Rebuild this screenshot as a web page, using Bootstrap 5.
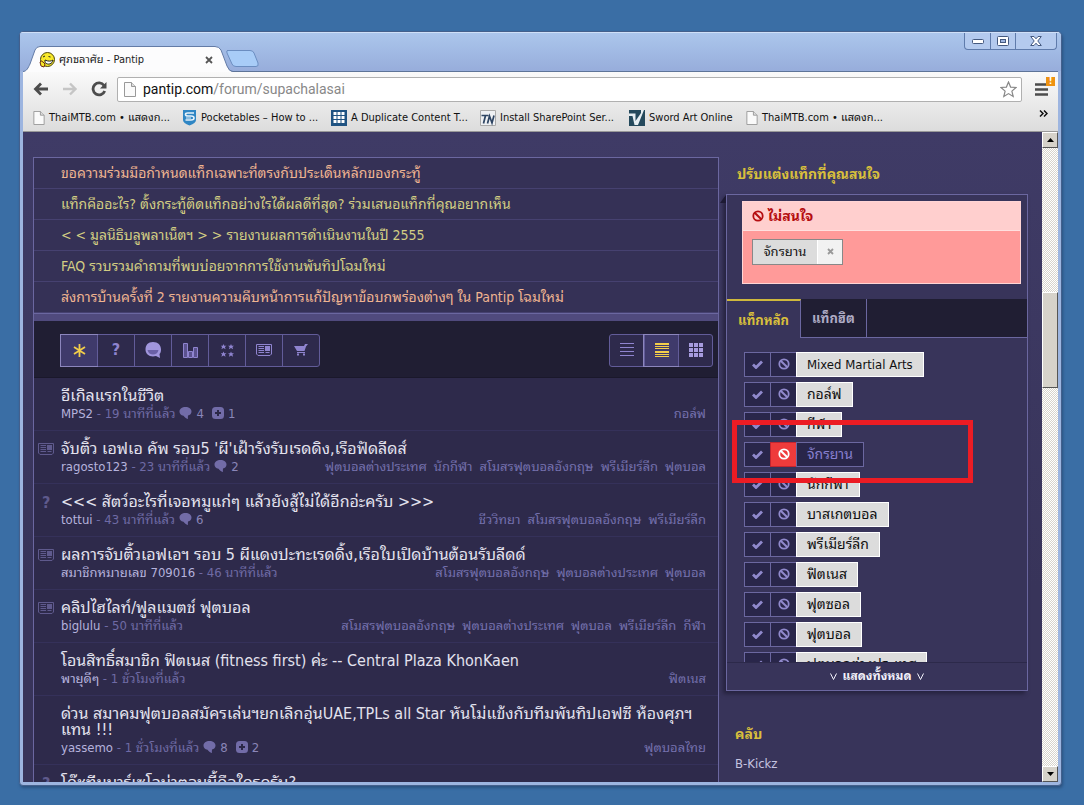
<!DOCTYPE html>
<html lang="th">
<head>
<meta charset="utf-8">
<meta name="viewport" content="width=device-width, initial-scale=1">
<title>ศุภชลาศัย - Pantip</title>
<link href="https://cdn.jsdelivr.net/npm/bootstrap@5.3.0/dist/css/bootstrap.min.css" rel="stylesheet">
<style>
  :root { --line: #6b67a0; --deep: #201e33; --panel: #38345a; }
  body { background: #3a6ea5; font-family: "DejaVu Sans Condensed", "Noto Sans Thai Looped", "Noto Looped Thai", Loma, Waree, "Noto Sans Thai", "Noto Sans", sans-serif; font-size: 13px; line-height: 18px; color: #c5c3e0; }
  a { text-decoration: none; color: inherit; }
  button { font: inherit; padding: 0; border: 0; background: none; color: inherit; }
  svg { display: block; flex: none; }
  .desk { height: 100vh; padding: 31px 22px 19px 19px; }
  .win { border: 1px solid #44608c; border-radius: 4px 5px 4px 4px; background: #9db5e0; padding: 0 3px 3px 3px; box-shadow: inset 0 1px #d4e4fa, 1px 2px 3px #2b5280; }
  .titlebar { height: 41px; margin: 0 -3px; padding: 0 3px; background: linear-gradient(#abc6ec, #97addb); border-top: 1px solid #cfe0f8; }
  .tabshape { width: 207px; height: 25px; padding: 3px 17px 0 16px; color: #222; font-size: 11px; }
  .tabshape > svg { left: 0; top: 0; }
  .newtab { margin: 0 0 4px -5px; }
  .winbtns { border: 1px solid #5f7bab; border-top: 0; border-radius: 0 0 4px 4px; height: 17px; margin-right: 1px; background: #b4caee; }
  .winbtns button { width: 25px; display: flex; align-items: center; justify-content: center; }
  .winbtns button + button { border-left: 1px solid #5f7bab; }
  .winbtns button:last-child { width: 41px; }
  .chrome { border-top: 1px solid #5e7498; background: linear-gradient(#fafafa, #dcdcdc); border-bottom: 1px solid #999; color: #111; }
  .navrow { height: 34px; padding: 5px 6px 4px 10px; gap: 13px; }
  .omni { height: 25px; border: 1px solid #b0b0b0; border-radius: 2px; background: #fff; padding: 0 4px 0 6px; font-family: Roboto, sans-serif; font-size: 14px; margin-left: -3px; gap: 7px; }
  .omni span { color: #888; }
  .alertdot { right: -7px; top: -6px; width: 9px; height: 9px; background: #ee9211; color: #fff; font-size: 9px; line-height: 9px; font-weight: bold; text-align: center; }
  .marks { height: 25px; padding: 0 10px 1px; font-size: 11px; }
  .marks a { flex: 0 0 149px; gap: 4px; white-space: nowrap; }
  .marks a.short { flex-basis: 117px; }
  .page { background: linear-gradient(#3f3b66, #38345a 70%); padding: 25px 14px 0 10px; gap: 7px; }
  .forum { border: 1px solid var(--line); border-bottom: 0; background: #2e2a4b; overflow: hidden; }
  .news a { display: block; height: 31px; padding: 6px 27px; background: #353156; border-bottom: 1px solid #464170; color: #d2cd83; font-size: 14px; white-space: nowrap; }
  .news a.hot { color: #efb491; }
  .strip { height: 8px; background: #504a7d; border-top: 1px solid #6b67a0; }
  .tools { height: 57px; background: var(--deep); border-bottom: 1px solid #1a182b; padding: 3px 5px 0 26px; }
  .tools .btn-group { border: 1px solid #625c99; border-radius: 3px; background: #2e2a4c; }
  .tools button { width: 37px; height: 31px; display: flex; align-items: center; justify-content: center; color: #8f84cf; }
  .tools button:first-child { width: 36px; }
  .tools button + button { border-left: 1px solid #625c99; }
  .tools .views button { width: 34px; }
  .tools button.on { background: #3f3a6b; box-shadow: 0 0 0 1px #8c86bd; color: #f2cd4a; }
  .topic { min-height: 53px; padding: 10px 12px 7px 4px; border-bottom: 1px solid #35315a; }
  .kind { flex: 0 0 23px; padding-top: 2px; color: #5f5a8d; }
  .topic h2 { font-size: 16px; line-height: 16px; margin: 0 0 1px; font-weight: 400; color: #e3e2ee; }
  .meta { color: #6f6aa5; font-size: 13px; gap: 4px; white-space: nowrap; }
  .meta b { font-weight: 400; color: #b5b2dc; }
  .meta i { font-style: normal; color: #8a86b8; }
  .meta svg { margin-bottom: 2px; }
  .taglinks { gap: 7px; color: #7470ad; white-space: nowrap; }
  .side { flex: 0 0 302px; }
  .side h3 { font-size: 14px; line-height: 18px; font-weight: 700; color: #d8bf3c; margin: 0; }
  .side .top { padding: 8px 11px 11px; }
  .box { border: 1px solid var(--line); background: var(--panel); box-shadow: -3px 3px 4px #26233f; }
  .fold { left: -7px; top: 0; }
  .ignored { margin: 6px 6px 15px 15px; border: 1px solid #ffd5d5; background: #ff9a99; height: 83px; }
  .ignored header { height: 29px; background: #ffcfce; border-bottom: 1px solid #ffe0df; padding: 0 9px; gap: 4px; color: #b50d10; font-weight: 700; font-size: 14px; }
  .chip { margin: 8px 9px; border: 1px solid #888; height: 26px; width: max-content; background: #dcdcdc; color: #111; }
  .chip button { width: 25px; border-left: 1px solid #fff; background: #f2f2f2; color: #999; display: flex; align-items: center; justify-content: center; }
  .chip span { width: 64px; text-align: center; line-height: 24px; }
  .tabs2 { height: 39px; background: var(--deep); border-bottom: 1px solid var(--line); }
  .tabs2 a { padding: 11px; height: 38px; border-right: 1px solid var(--line); font-weight: 700; color: #aeabc5; white-space: nowrap; }
  .tabs2 a.on { height: 39px; border-top: 2px solid #cfb83d; background: var(--panel); color: #d8bf3c; }
  .taglist { height: 324px; padding: 14px 17px 0; overflow: hidden; }
  .tagrow { height: 25px; margin-bottom: 5px; }
  .tagrow button { width: 26px; border: 1px solid var(--line); border-right: 0; background: #29264a; color: #9089cc; display: flex; align-items: center; justify-content: center; }
  .tagrow > a { border: 1px solid #fff; background: #dcdcdc; color: #111; padding: 0 10px; font-size: 14px; line-height: 23px; white-space: nowrap; }
  .tagrow > a:lang(en) { font-size: 13px; }
  .tagrow.off > a { background: #29264a; border-color: var(--line); color: #8880d0; }
  .tagrow.off button.no { background: #ef3b3b; border-color: #c32630; color: #fff; }
  .callout { left: -12px; top: -22px; width: 241px; height: 63px; border: 5px solid #ec1c24; pointer-events: none; z-index: 2; }
  .all { height: 28px; border-top: 1px solid #2c294a; color: #f1f0fa; font-weight: 700; font-size: 12px; gap: 5px; }
  .club { padding: 34px 9px 0; }
  .club a { display: block; margin-top: 12px; }
  .sbar { flex: 0 0 16px; background: repeating-conic-gradient(#d8d4cc 0 25%, #fff 0 50%) 0 0 / 2px 2px; }
  .sbar button, .thumb { background: #d6d2ca; border: 1px solid; border-color: #fff #555 #555 #fff; }
  .sbar button { height: 16px; display: flex; align-items: center; justify-content: center; color: #000; }
  .thumb { flex: 94 0 0; }
</style>
</head>
<body>
<svg width="0" height="0" class="position-absolute" aria-hidden="true">
  <symbol id="doc" viewBox="0 0 12 15"><path d="M.5.5h7l4 4v10H.5z" fill="#fafafa" stroke="#999"/><path d="M7.500.5v4h4" fill="#ddd" stroke="#999"/></symbol>
  <symbol id="ok" viewBox="0 0 11 9"><path d="M1 4.500 4 7.500 10 1.500" fill="none" stroke="currentColor" stroke-width="2.800"/></symbol>
  <symbol id="no" viewBox="0 0 12 12"><circle cx="6" cy="6" r="4.700" fill="none" stroke="currentColor" stroke-width="1.800"/><path d="M2.700 2.700 9.300 9.300" stroke="currentColor" stroke-width="2"/></symbol>
  <symbol id="say" viewBox="0 0 13 12"><path d="M6.500 0C10 0 12.500 1.800 12.500 4.500 12.500 7 11 8 9 8.500 8.800 10 8.800 11 9 12 7 11.500 5.500 10 4.500 8.700 1.800 8.300.5 6.800.5 4.500.5 1.800 3 0 6.500 0z" fill="#726ca8"/></symbol>
  <symbol id="plus" viewBox="0 0 12 12"><rect width="12" height="12" rx="3.500" fill="#726ca8"/><path d="M6 3v6M3 6h6" stroke="#2b2847" stroke-width="2"/></symbol>
  <symbol id="paper" viewBox="0 0 16 12"><path d="M.5.5h15v9.500l-1.500 1.500H2L.5 10z" fill="none" stroke="currentColor"/><path d="M2.500 2.500h5.500M2.500 4.500h5.500M2.500 6.500h5.500M2.500 8.500h5.500M9.500 8.500h4" stroke="currentColor"/><path d="M9 2h5v5H9z" fill="currentColor"/></symbol>
</svg>
<div class="desk">
<div class="win h-100 d-flex flex-column overflow-hidden">
  <div class="titlebar d-flex justify-content-between">
    <div class="d-flex align-items-end">
      <div class="tabshape position-relative d-flex align-items-center">
        <svg class="position-absolute" width="210" height="26"><path d="M0 26C4 25 5 22 7 18L12 4Q13.500.5 17 .5H192Q196 .5 198 4L204 20Q206 25.500 210 26z" fill="#fcfcfd"/><path d="M0 25.500C4 25 5 22 7 18L12 4Q13.500.5 17 .5H192Q196 .5 198 4L204 20Q206 25.500 210 25.500" fill="none" stroke="#637ba6"/></svg>
        <svg class="position-relative me-1" width="16" height="16" viewBox="0 0 16 16"><circle cx="8.500" cy="7.500" r="7" fill="#f8e92a" stroke="#4c4508"/><path d="M4 5l2-1M9.500 4.500l2 .5" stroke="#222"/><path d="M6 8c3 1.500 6 1.500 8 0-.5 4-5 5.500-8 2.500z" fill="#fff" stroke="#222"/><path d="M1 10q1-2 3 0l2 2-1 3-3-1z" fill="#f8e92a" stroke="#6d2b18"/></svg>
        <span class="position-relative flex-grow-1 text-nowrap">ศุภชลาศัย - Pantip</span>
        <button class="position-relative" aria-label="Close tab"><svg width="8" height="8"><path d="M1 1l6 6M7 1l-6 6" stroke="#555" stroke-width="1.800"/></svg></button>
      </div>
      <button class="newtab position-relative" aria-label="New tab"><svg width="34" height="17"><path d="M2 .5H25Q28 .5 29 3L33 13Q34 16.500 31 16.500H11Q8 16.500 7 14L2 3Q1 .5 3 .5z" fill="#a8ccf7" stroke="#6b8dc0"/></svg></button>
    </div>
    <div class="winbtns d-flex">
      <button aria-label="Minimize"><svg width="12" height="6"><rect x=".5" y="1.500" width="11" height="4" rx="1" fill="#fff" stroke="#44597f"/></svg></button>
      <button aria-label="Maximize"><svg width="12" height="10"><rect x=".5" y=".5" width="11" height="9" rx="1" fill="#fff" stroke="#44597f"/><rect x="3.500" y="3.500" width="5" height="3" fill="#9db5e0" stroke="#44597f"/></svg></button>
      <button aria-label="Close"><svg width="12" height="10" viewBox="0 0 12 10"><path d="M.7.5H4L6 2.800 8 .5h3.300L7.800 5l3.500 4.500H8L6 7.200 4 9.500H.7L4.200 5z" fill="#fff" stroke="#44597f"/></svg></button>
    </div>
  </div>
  <div class="chrome">
    <div class="navrow d-flex align-items-center">
      <button aria-label="Back"><svg width="16" height="14"><path d="M8 1.500 2.500 7 8 12.500M2.500 7H15" fill="none" stroke="#4c4c4c" stroke-width="2.800"/></svg></button>
      <button aria-label="Forward"><svg width="16" height="14"><path d="M8 1.500 13.500 7 8 12.500M13.500 7H1" fill="none" stroke="#c5c5c5" stroke-width="2.400"/></svg></button>
      <button aria-label="Reload"><svg width="16" height="16"><path d="M13 4.500A6 6 0 1 0 13.700 10" fill="none" stroke="#4c4c4c" stroke-width="2.800"/><path d="M15.500 1v6.500H9z" fill="#4c4c4c"/></svg></button>
      <div class="omni flex-grow-1 d-flex align-items-center">
        <svg width="12" height="15"><use href="#doc"/></svg>
        <div class="flex-grow-1">pantip.com<span>/forum/supachalasai</span></div>
        <button aria-label="Bookmark this page"><svg width="17" height="17" viewBox="0 0 17 17"><path d="M8.500 1l2.100 5.100 5.400.4-4.100 3.600 1.300 5.400-4.700-2.900-4.700 2.900 1.300-5.400L1 6.500l5.400-.4z" fill="#fff" stroke="#888" stroke-width="1.200"/></svg></button>
      </div>
      <button class="position-relative me-1" aria-label="Menu"><svg width="13" height="13"><path d="M0 1.500h13M0 6.500h13M0 11.500h13" stroke="#4c4c4c" stroke-width="2.600"/></svg><span class="alertdot position-absolute">!</span></button>
    </div>
    <nav class="marks d-flex align-items-center" aria-label="Bookmarks">
      <a href="#" class="d-flex align-items-center"><svg width="12" height="14"><use href="#doc"/></svg>ThaiMTB.com • แสดงก...</a>
      <a href="#" class="d-flex align-items-center"><svg width="15" height="17" viewBox="0 0 15 17"><path d="M1 1h13v10q0 3-6.500 5.500Q1 14 1 11z" fill="#2f86c4"/><path d="M12 4H5.500q-2 0-2 1.500T6 7h3q3 0 3 2t-3 2H3.500" fill="none" stroke="#e4f1fa" stroke-width="1.600"/><path d="M4 9h5" stroke="#e4f1fa"/></svg>Pocketables – How to ...</a>
      <a href="#" class="d-flex align-items-center"><svg width="16" height="16"><path fill="#1f5382" d="M0 0h16v16H0z"/><path d="M4 2v12M8 2v12M12 2v12" stroke="#fff" stroke-width="3" stroke-dasharray="3 1"/></svg>A Duplicate Content T...</a>
      <a href="#" class="d-flex align-items-center"><svg width="16" height="16"><path d="M.5.5h15v15H.5z" fill="#eef0f3" stroke="#aaa"/><path d="M1.500 5.500h7M5.500 5.500 3.500 13.500M7.500 13.500l2-7.500 2.500 7 2-7.500" fill="none" stroke="#2e4563" stroke-width="1.700"/></svg>Install SharePoint Ser...</a>
      <a href="#" class="short d-flex align-items-center"><svg width="16" height="16"><path fill="#24495c" d="M0 0h16v16H0z"/><path d="M0 3.500h6.500v7.500L12 3V0h3L9 15H5.500L3.500 6H0z" fill="#e6eef2"/></svg>Sword Art Online</a>
      <a href="#" class="d-flex align-items-center"><svg width="12" height="14"><use href="#doc"/></svg>ThaiMTB.com • แสดงก...</a>
      <button class="ms-auto mb-2" aria-label="More bookmarks"><svg width="9" height="7"><path d="M1 .5l3 3-3 3M5 .5l3 3-3 3" fill="none" stroke="#111" stroke-width="1.500"/></svg></button>
    </nav>
  </div>
  <div class="d-flex flex-grow-1 overflow-hidden">
    <div class="page flex-grow-1 d-flex overflow-hidden">
      <main class="forum flex-grow-1">
        <div class="news">
          <a href="#" class="hot">ขอความร่วมมือกำหนดแท็กเฉพาะที่ตรงกับประเด็นหลักของกระทู้</a>
          <a href="#">แท็กคืออะไร? ตั้งกระทู้ติดแท็กอย่างไรได้ผลดีที่สุด? ร่วมเสนอแท็กที่คุณอยากเห็น</a>
          <a href="#">&lt; &lt; มูลนิธิบลูพลาเน็ตฯ &gt; &gt; รายงานผลการดำเนินงานในปี 2555</a>
          <a href="#">FAQ รวบรวมคำถามที่พบบ่อยจากการใช้งานพันทิปโฉมใหม่</a>
          <a href="#" class="hot">ส่งการบ้านครั้งที่ 2 รายงานความคืบหน้าการแก้ปัญหาข้อบกพร่องต่างๆ ใน Pantip โฉมใหม่</a>
        </div>
        <div class="strip"></div>
        <div class="tools d-flex align-items-center justify-content-between">
          <div class="btn-group">
            <button class="on" aria-label="All"><svg width="13" height="13"><path d="M6.500 0v13M1 3l11 7M12 3 1 10" stroke="currentColor" stroke-width="1.800"/></svg></button>
            <button class="fw-bold fs-6" aria-label="Questions">?</button>
            <button aria-label="Chat"><svg width="17" height="16"><path d="M8 0c5 0 8 3 8 7.500 0 2-.5 3.500-1.500 4.500l.5 4-4-2C5 15.500.5 12.500.5 7.500.5 3 3 0 8 0z" fill="#a196dd"/><path d="M2.500 8h11c-.5 3-3 4.500-5.500 4.500S3 11 2.500 8z" fill="#6a60a6"/></svg></button>
            <button aria-label="Polls"><svg width="15" height="15"><path d="M.5.5h4v14h-4zM5.500 8.500h4v6h-4zM10.500 4.500h4v10h-4z" fill="#5b528f" stroke="currentColor"/></svg></button>
            <button aria-label="Reviews"><svg width="13" height="13" viewBox="0 0 13 13"><g fill="currentColor"><path id="st" d="M2.500 0l.8 1.700H5.500L3.900 3l.7 2.300-2.100-1.300L.4 5.300 1.100 3-.5 1.700h2.200z"/><use href="#st" x="7.500"/><use href="#st" y="7.500"/><use href="#st" x="7.500" y="7.500"/></g></svg></button>
            <button aria-label="News"><svg width="16" height="12"><use href="#paper"/></svg></button>
            <button aria-label="Market"><svg width="14" height="12"><path d="M0 2l10 0 1-2h3L12 2.500 10.500 7H3z" fill="currentColor"/><path d="M3 8.500h8" stroke="currentColor"/><path d="M3 10.500h2M9 10.500h2" stroke="currentColor" stroke-width="2"/></svg></button>
          </div>
          <div class="btn-group views">
            <button aria-label="Compact list"><svg width="14" height="14"><path d="M0 .5h14M0 4.500h14M0 8.500h14M0 12.500h14" stroke="currentColor"/></svg></button>
            <button class="on" aria-label="Detailed list"><svg width="14" height="15"><path d="M0 1h14M0 9h14" stroke="currentColor" stroke-width="2"/><path d="M0 3.500h14M0 5.500h14M0 11.500h14M0 13.500h14" stroke="currentColor"/></svg></button>
            <button aria-label="Grid"><svg width="14" height="14"><path d="M2 0v14M7 0v14M12 0v14" stroke="#a79cdf" stroke-width="4" stroke-dasharray="4 1"/></svg></button>
          </div>
        </div>
        <article class="topic d-flex"><div class="kind"></div><div class="flex-grow-1">
          <h2><a href="#">อีเกิลแรกในชีวิต</a></h2>
          <div class="d-flex justify-content-between"><div class="meta d-flex align-items-center"><span><b>MPS2</b> - 19 นาทีที่แล้ว</span><svg width="13" height="12"><use href="#say"/></svg><i>4</i><svg class="ms-1" width="12" height="12"><use href="#plus"/></svg><i>1</i></div>
          <div class="taglinks d-flex"><a href="#">กอล์ฟ</a></div></div></div></article>
        <article class="topic d-flex"><div class="kind"><svg width="16" height="12"><use href="#paper"/></svg></div><div class="flex-grow-1">
          <h2><a href="#">จับติ้ว เอฟเอ คัพ รอบ5 'ผี'เฝ้ารังรับเรดดิง,เรือฟัดลีดส์</a></h2>
          <div class="d-flex justify-content-between"><div class="meta d-flex align-items-center"><span><b>ragosto123</b> - 23 นาทีที่แล้ว</span><svg width="13" height="12"><use href="#say"/></svg><i>2</i></div>
          <div class="taglinks d-flex"><a href="#">ฟุตบอลต่างประเทศ</a><a href="#">นักกีฬา</a><a href="#">สโมสรฟุตบอลอังกฤษ</a><a href="#">พรีเมียร์ลีก</a><a href="#">ฟุตบอล</a></div></div></div></article>
        <article class="topic d-flex"><div class="kind fs-6 fw-bold ps-1 pt-0">?</div><div class="flex-grow-1">
          <h2><a href="#">&lt;&lt;&lt; สัตว์อะไรที่เจอหมูแก่ๆ แล้วยังสู้ไม่ได้อีกอ่ะครับ &gt;&gt;&gt;</a></h2>
          <div class="d-flex justify-content-between"><div class="meta d-flex align-items-center"><span><b>tottui</b> - 43 นาทีที่แล้ว</span><svg width="13" height="12"><use href="#say"/></svg><i>6</i></div>
          <div class="taglinks d-flex"><a href="#">ชีววิทยา</a><a href="#">สโมสรฟุตบอลอังกฤษ</a><a href="#">พรีเมียร์ลีก</a></div></div></div></article>
        <article class="topic d-flex"><div class="kind"><svg width="16" height="12"><use href="#paper"/></svg></div><div class="flex-grow-1">
          <h2><a href="#">ผลการจับติ้วเอฟเอฯ รอบ 5 ผีแดงปะทะเรดดิ้ง,เรือใบเปิดบ้านต้อนรับลีดด์</a></h2>
          <div class="d-flex justify-content-between"><div class="meta d-flex align-items-center"><span><b>สมาชิกหมายเลข 709016</b> - 46 นาทีที่แล้ว</span></div>
          <div class="taglinks d-flex"><a href="#">สโมสรฟุตบอลอังกฤษ</a><a href="#">ฟุตบอลต่างประเทศ</a><a href="#">ฟุตบอล</a></div></div></div></article>
        <article class="topic d-flex"><div class="kind"><svg width="16" height="12"><use href="#paper"/></svg></div><div class="flex-grow-1">
          <h2><a href="#">คลิปไฮไลท์/ฟูลแมตช์ ฟุตบอล</a></h2>
          <div class="d-flex justify-content-between"><div class="meta d-flex align-items-center"><span><b>biglulu</b> - 50 นาทีที่แล้ว</span></div>
          <div class="taglinks d-flex"><a href="#">สโมสรฟุตบอลอังกฤษ</a><a href="#">ฟุตบอลต่างประเทศ</a><a href="#">ฟุตบอล</a><a href="#">พรีเมียร์ลีก</a><a href="#">กีฬา</a></div></div></div></article>
        <article class="topic d-flex"><div class="kind"></div><div class="flex-grow-1">
          <h2><a href="#">โอนสิทธิ์สมาชิก ฟิตเนส (fitness first) ค่ะ -- Central Plaza KhonKaen</a></h2>
          <div class="d-flex justify-content-between"><div class="meta d-flex align-items-center"><span><b>พายุดีๆ</b> - 1 ชั่วโมงที่แล้ว</span></div>
          <div class="taglinks d-flex"><a href="#">ฟิตเนส</a></div></div></div></article>
        <article class="topic d-flex"><div class="kind"></div><div class="flex-grow-1">
          <h2><a href="#">ด่วน สมาคมฟุตบอลสมัครเล่นฯยกเลิกอุ่นUAE,TPLs all Star หันโม่แข้งกับทีมพันทิปเอฟซี ห้องศุภฯ แทน !!!</a></h2>
          <div class="d-flex justify-content-between"><div class="meta d-flex align-items-center"><span><b>yassemo</b> - 1 ชั่วโมงที่แล้ว</span><svg width="13" height="12"><use href="#say"/></svg><i>8</i><svg class="ms-1" width="12" height="12"><use href="#plus"/></svg><i>2</i></div>
          <div class="taglinks d-flex"><a href="#">ฟุตบอลไทย</a></div></div></div></article>
        <article class="topic d-flex"><div class="kind fs-6 fw-bold ps-1 pt-0">?</div><div class="flex-grow-1">
          <h2><a href="#">โค๊ชทีมบาร์เซโลน่าตอนนี้คือใครครับ?</a></h2></div></article>
      </main>
      <aside class="side">
        <h3 class="top">ปรับแต่งแท็กที่คุณสนใจ</h3>
        <div class="box position-relative">
          <svg class="fold position-absolute" width="6" height="8"><path d="M6 0v8H0z" fill="#1d1a33"/></svg>
          <section class="ignored">
            <header class="d-flex align-items-center"><svg width="12" height="12"><use href="#no"/></svg>ไม่สนใจ</header>
            <div class="chip d-flex"><span>จักรยาน</span><button aria-label="ลบ"><svg width="7" height="7"><path d="M1 1l5 5M6 1 1 6" stroke="currentColor" stroke-width="1.800"/></svg></button></div>
          </section>
          <nav class="tabs2 d-flex"><a href="#" class="on">แท็กหลัก</a><a href="#">แท็กฮิต</a></nav>
          <div class="taglist">
            <div class="tagrow d-flex"><button aria-label="สนใจ"><svg width="11" height="9"><use href="#ok"/></svg></button><button aria-label="ไม่สนใจ"><svg width="12" height="12"><use href="#no"/></svg></button><a href="#" lang="en">Mixed Martial Arts</a></div>
            <div class="tagrow d-flex"><button aria-label="สนใจ"><svg width="11" height="9"><use href="#ok"/></svg></button><button aria-label="ไม่สนใจ"><svg width="12" height="12"><use href="#no"/></svg></button><a href="#">กอล์ฟ</a></div>
            <div class="tagrow d-flex"><button aria-label="สนใจ"><svg width="11" height="9"><use href="#ok"/></svg></button><button aria-label="ไม่สนใจ"><svg width="12" height="12"><use href="#no"/></svg></button><a href="#">กีฬา</a></div>
            <div class="tagrow off d-flex position-relative"><button aria-label="สนใจ"><svg width="11" height="9"><use href="#ok"/></svg></button><button class="no" aria-label="ไม่สนใจ"><svg width="12" height="12"><use href="#no"/></svg></button><a href="#">จักรยาน</a><div class="callout position-absolute"></div></div>
            <div class="tagrow d-flex"><button aria-label="สนใจ"><svg width="11" height="9"><use href="#ok"/></svg></button><button aria-label="ไม่สนใจ"><svg width="12" height="12"><use href="#no"/></svg></button><a href="#">นักกีฬา</a></div>
            <div class="tagrow d-flex"><button aria-label="สนใจ"><svg width="11" height="9"><use href="#ok"/></svg></button><button aria-label="ไม่สนใจ"><svg width="12" height="12"><use href="#no"/></svg></button><a href="#">บาสเกตบอล</a></div>
            <div class="tagrow d-flex"><button aria-label="สนใจ"><svg width="11" height="9"><use href="#ok"/></svg></button><button aria-label="ไม่สนใจ"><svg width="12" height="12"><use href="#no"/></svg></button><a href="#">พรีเมียร์ลีก</a></div>
            <div class="tagrow d-flex"><button aria-label="สนใจ"><svg width="11" height="9"><use href="#ok"/></svg></button><button aria-label="ไม่สนใจ"><svg width="12" height="12"><use href="#no"/></svg></button><a href="#">ฟิตเนส</a></div>
            <div class="tagrow d-flex"><button aria-label="สนใจ"><svg width="11" height="9"><use href="#ok"/></svg></button><button aria-label="ไม่สนใจ"><svg width="12" height="12"><use href="#no"/></svg></button><a href="#">ฟุตซอล</a></div>
            <div class="tagrow d-flex"><button aria-label="สนใจ"><svg width="11" height="9"><use href="#ok"/></svg></button><button aria-label="ไม่สนใจ"><svg width="12" height="12"><use href="#no"/></svg></button><a href="#">ฟุตบอล</a></div>
            <div class="tagrow d-flex"><button aria-label="สนใจ"><svg width="11" height="9"><use href="#ok"/></svg></button><button aria-label="ไม่สนใจ"><svg width="12" height="12"><use href="#no"/></svg></button><a href="#">ฟุตบอลต่างประเทศ</a></div>
          </div>
          <a href="#" class="all d-flex align-items-center justify-content-center"><svg width="7" height="7"><path d="M.5.5l3 6 3-6" fill="none" stroke="currentColor"/></svg>แสดงทั้งหมด<svg width="7" height="7"><path d="M.5.5l3 6 3-6" fill="none" stroke="currentColor"/></svg></a>
        </div>
        <section class="club"><h3>คลับ</h3><a href="#">B-Kickz</a></section>
      </aside>
    </div>
    <div class="sbar d-flex flex-column">
      <button aria-label="Scroll up"><svg width="7" height="4"><path d="M0 4h7L3.500 0z"/></svg></button>
      <div style="flex:145 0 0"></div><div class="thumb"></div><div style="flex:380 0 0"></div>
      <button aria-label="Scroll down"><svg width="7" height="4"><path d="M0 0h7L3.500 4z"/></svg></button>
    </div>
  </div>
</div>
</div>
<script src="https://cdn.jsdelivr.net/npm/bootstrap@5.3.0/dist/js/bootstrap.bundle.min.js"></script>
</body>
</html>
